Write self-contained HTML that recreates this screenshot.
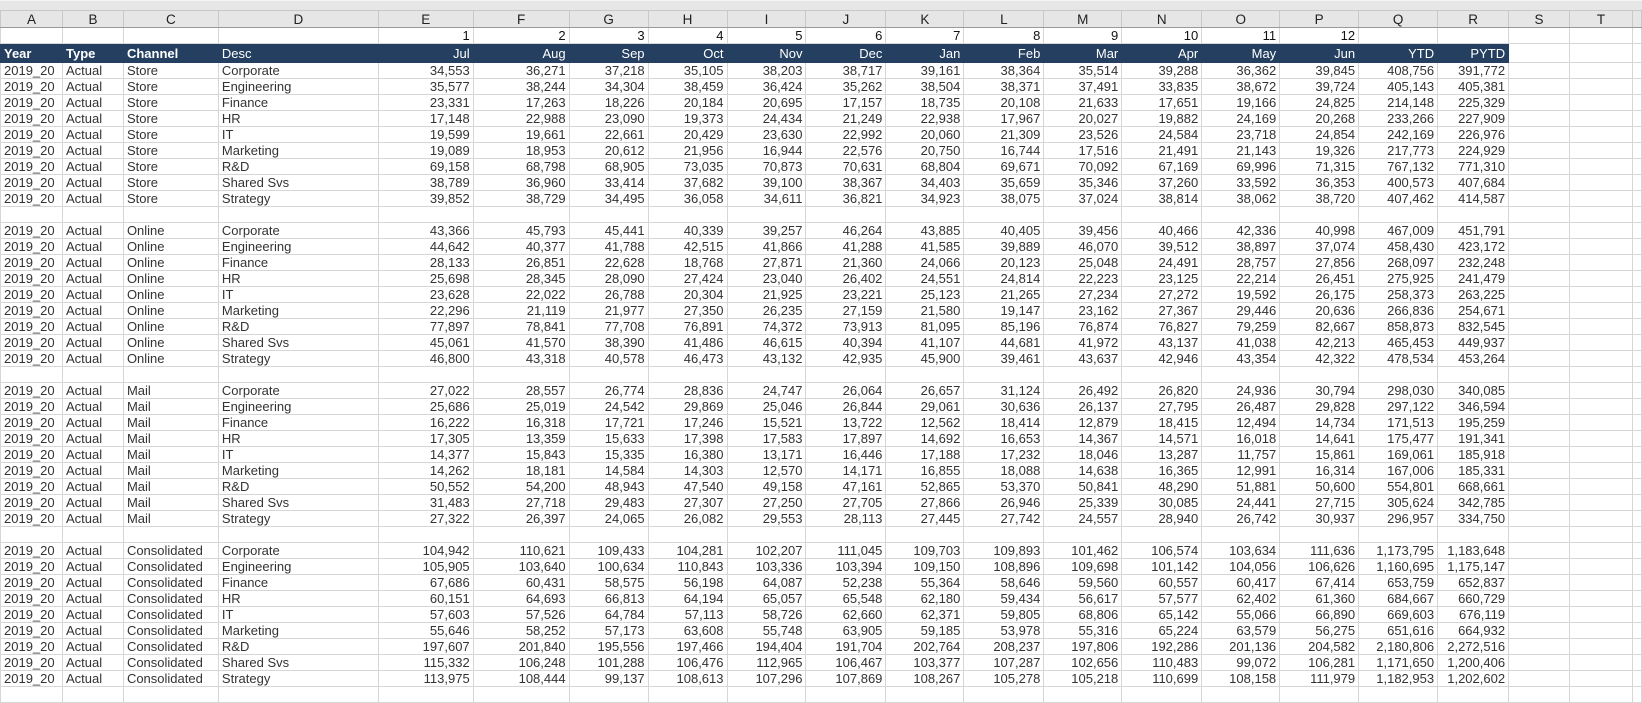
<!DOCTYPE html>
<html><head><meta charset="utf-8"><style>
html,body{margin:0;padding:0;background:#fff;width:1642px;height:691px;overflow:hidden}
.top{position:absolute;left:0;top:0;width:1642px;height:10px;background:#e6e6e6;border-top:1px solid #f4f4f4;box-sizing:border-box}
table{position:absolute;left:0;top:10px;border-collapse:collapse;table-layout:fixed;font-family:"Liberation Sans",Arial,sans-serif;font-size:13px;color:#333}
td{height:15px;padding:0 3px 0 3px;border:1px solid #d6d6d6;white-space:nowrap;overflow:hidden;line-height:15px}
tr.ch td{background:#e6e6e6;text-align:center;border-color:#c8c8c8;border-bottom:1px solid #9a9a9a;color:#222;font-size:13.5px;height:16px}
tr.num td{color:#111;text-align:right}
tr.hd td{background:#243f60;color:#fff;height:18px;border-color:#243f60;font-size:13px}
tr.hd td.b{font-weight:bold;text-align:left}
tr.hd td.n{text-align:right}
tr.hd td.x{background:#fff;border-color:#d6d6d6}
tr.d td:nth-child(n+5){text-align:right}
</style></head><body>
<div class="top"></div>
<table>
<colgroup><col style="width:62px"><col style="width:61px"><col style="width:95px"><col style="width:160px"><col style="width:95px"><col style="width:96px"><col style="width:79px"><col style="width:79px"><col style="width:79px"><col style="width:80px"><col style="width:78px"><col style="width:80px"><col style="width:78px"><col style="width:80px"><col style="width:78px"><col style="width:79px"><col style="width:79px"><col style="width:71px"><col style="width:61px"><col style="width:63px"><col style="width:9px"></colgroup>
<tr class="ch"><td>A<td>B<td>C<td>D<td>E<td>F<td>G<td>H<td>I<td>J<td>K<td>L<td>M<td>N<td>O<td>P<td>Q<td>R<td>S<td>T<td></tr>
<tr class="num"><td><td><td><td><td>1<td>2<td>3<td>4<td>5<td>6<td>7<td>8<td>9<td>10<td>11<td>12<td><td><td><td><td></tr>
<tr class="hd"><td class="b">Year<td class="b">Type<td class="b">Channel<td style="text-align:left">Desc<td class="n">Jul<td class="n">Aug<td class="n">Sep<td class="n">Oct<td class="n">Nov<td class="n">Dec<td class="n">Jan<td class="n">Feb<td class="n">Mar<td class="n">Apr<td class="n">May<td class="n">Jun<td class="n">YTD<td class="n">PYTD<td class="x"><td class="x"><td class="x"></tr>
<tr class="d"><td>2019_20<td>Actual<td>Store<td>Corporate<td>34,553<td>36,271<td>37,218<td>35,105<td>38,203<td>38,717<td>39,161<td>38,364<td>35,514<td>39,288<td>36,362<td>39,845<td>408,756<td>391,772<td><td><td></tr>
<tr class="d"><td>2019_20<td>Actual<td>Store<td>Engineering<td>35,577<td>38,244<td>34,304<td>38,459<td>36,424<td>35,262<td>38,504<td>38,371<td>37,491<td>33,835<td>38,672<td>39,724<td>405,143<td>405,381<td><td><td></tr>
<tr class="d"><td>2019_20<td>Actual<td>Store<td>Finance<td>23,331<td>17,263<td>18,226<td>20,184<td>20,695<td>17,157<td>18,735<td>20,108<td>21,633<td>17,651<td>19,166<td>24,825<td>214,148<td>225,329<td><td><td></tr>
<tr class="d"><td>2019_20<td>Actual<td>Store<td>HR<td>17,148<td>22,988<td>23,090<td>19,373<td>24,434<td>21,249<td>22,938<td>17,967<td>20,027<td>19,882<td>24,169<td>20,268<td>233,266<td>227,909<td><td><td></tr>
<tr class="d"><td>2019_20<td>Actual<td>Store<td>IT<td>19,599<td>19,661<td>22,661<td>20,429<td>23,630<td>22,992<td>20,060<td>21,309<td>23,526<td>24,584<td>23,718<td>24,854<td>242,169<td>226,976<td><td><td></tr>
<tr class="d"><td>2019_20<td>Actual<td>Store<td>Marketing<td>19,089<td>18,953<td>20,612<td>21,956<td>16,944<td>22,576<td>20,750<td>16,744<td>17,516<td>21,491<td>21,143<td>19,326<td>217,773<td>224,929<td><td><td></tr>
<tr class="d"><td>2019_20<td>Actual<td>Store<td>R&amp;D<td>69,158<td>68,798<td>68,905<td>73,035<td>70,873<td>70,631<td>68,804<td>69,671<td>70,092<td>67,169<td>69,996<td>71,315<td>767,132<td>771,310<td><td><td></tr>
<tr class="d"><td>2019_20<td>Actual<td>Store<td>Shared Svs<td>38,789<td>36,960<td>33,414<td>37,682<td>39,100<td>38,367<td>34,403<td>35,659<td>35,346<td>37,260<td>33,592<td>36,353<td>400,573<td>407,684<td><td><td></tr>
<tr class="d"><td>2019_20<td>Actual<td>Store<td>Strategy<td>39,852<td>38,729<td>34,495<td>36,058<td>34,611<td>36,821<td>34,923<td>38,075<td>37,024<td>38,814<td>38,062<td>38,720<td>407,462<td>414,587<td><td><td></tr>
<tr class="d"><td><td><td><td><td><td><td><td><td><td><td><td><td><td><td><td><td><td><td><td><td></tr>
<tr class="d"><td>2019_20<td>Actual<td>Online<td>Corporate<td>43,366<td>45,793<td>45,441<td>40,339<td>39,257<td>46,264<td>43,885<td>40,405<td>39,456<td>40,466<td>42,336<td>40,998<td>467,009<td>451,791<td><td><td></tr>
<tr class="d"><td>2019_20<td>Actual<td>Online<td>Engineering<td>44,642<td>40,377<td>41,788<td>42,515<td>41,866<td>41,288<td>41,585<td>39,889<td>46,070<td>39,512<td>38,897<td>37,074<td>458,430<td>423,172<td><td><td></tr>
<tr class="d"><td>2019_20<td>Actual<td>Online<td>Finance<td>28,133<td>26,851<td>22,628<td>18,768<td>27,871<td>21,360<td>24,066<td>20,123<td>25,048<td>24,491<td>28,757<td>27,856<td>268,097<td>232,248<td><td><td></tr>
<tr class="d"><td>2019_20<td>Actual<td>Online<td>HR<td>25,698<td>28,345<td>28,090<td>27,424<td>23,040<td>26,402<td>24,551<td>24,814<td>22,223<td>23,125<td>22,214<td>26,451<td>275,925<td>241,479<td><td><td></tr>
<tr class="d"><td>2019_20<td>Actual<td>Online<td>IT<td>23,628<td>22,022<td>26,788<td>20,304<td>21,925<td>23,221<td>25,123<td>21,265<td>27,234<td>27,272<td>19,592<td>26,175<td>258,373<td>263,225<td><td><td></tr>
<tr class="d"><td>2019_20<td>Actual<td>Online<td>Marketing<td>22,296<td>21,119<td>21,977<td>27,350<td>26,235<td>27,159<td>21,580<td>19,147<td>23,162<td>27,367<td>29,446<td>20,636<td>266,836<td>254,671<td><td><td></tr>
<tr class="d"><td>2019_20<td>Actual<td>Online<td>R&amp;D<td>77,897<td>78,841<td>77,708<td>76,891<td>74,372<td>73,913<td>81,095<td>85,196<td>76,874<td>76,827<td>79,259<td>82,667<td>858,873<td>832,545<td><td><td></tr>
<tr class="d"><td>2019_20<td>Actual<td>Online<td>Shared Svs<td>45,061<td>41,570<td>38,390<td>41,486<td>46,615<td>40,394<td>41,107<td>44,681<td>41,972<td>43,137<td>41,038<td>42,213<td>465,453<td>449,937<td><td><td></tr>
<tr class="d"><td>2019_20<td>Actual<td>Online<td>Strategy<td>46,800<td>43,318<td>40,578<td>46,473<td>43,132<td>42,935<td>45,900<td>39,461<td>43,637<td>42,946<td>43,354<td>42,322<td>478,534<td>453,264<td><td><td></tr>
<tr class="d"><td><td><td><td><td><td><td><td><td><td><td><td><td><td><td><td><td><td><td><td><td></tr>
<tr class="d"><td>2019_20<td>Actual<td>Mail<td>Corporate<td>27,022<td>28,557<td>26,774<td>28,836<td>24,747<td>26,064<td>26,657<td>31,124<td>26,492<td>26,820<td>24,936<td>30,794<td>298,030<td>340,085<td><td><td></tr>
<tr class="d"><td>2019_20<td>Actual<td>Mail<td>Engineering<td>25,686<td>25,019<td>24,542<td>29,869<td>25,046<td>26,844<td>29,061<td>30,636<td>26,137<td>27,795<td>26,487<td>29,828<td>297,122<td>346,594<td><td><td></tr>
<tr class="d"><td>2019_20<td>Actual<td>Mail<td>Finance<td>16,222<td>16,318<td>17,721<td>17,246<td>15,521<td>13,722<td>12,562<td>18,414<td>12,879<td>18,415<td>12,494<td>14,734<td>171,513<td>195,259<td><td><td></tr>
<tr class="d"><td>2019_20<td>Actual<td>Mail<td>HR<td>17,305<td>13,359<td>15,633<td>17,398<td>17,583<td>17,897<td>14,692<td>16,653<td>14,367<td>14,571<td>16,018<td>14,641<td>175,477<td>191,341<td><td><td></tr>
<tr class="d"><td>2019_20<td>Actual<td>Mail<td>IT<td>14,377<td>15,843<td>15,335<td>16,380<td>13,171<td>16,446<td>17,188<td>17,232<td>18,046<td>13,287<td>11,757<td>15,861<td>169,061<td>185,918<td><td><td></tr>
<tr class="d"><td>2019_20<td>Actual<td>Mail<td>Marketing<td>14,262<td>18,181<td>14,584<td>14,303<td>12,570<td>14,171<td>16,855<td>18,088<td>14,638<td>16,365<td>12,991<td>16,314<td>167,006<td>185,331<td><td><td></tr>
<tr class="d"><td>2019_20<td>Actual<td>Mail<td>R&amp;D<td>50,552<td>54,200<td>48,943<td>47,540<td>49,158<td>47,161<td>52,865<td>53,370<td>50,841<td>48,290<td>51,881<td>50,600<td>554,801<td>668,661<td><td><td></tr>
<tr class="d"><td>2019_20<td>Actual<td>Mail<td>Shared Svs<td>31,483<td>27,718<td>29,483<td>27,307<td>27,250<td>27,705<td>27,866<td>26,946<td>25,339<td>30,085<td>24,441<td>27,715<td>305,624<td>342,785<td><td><td></tr>
<tr class="d"><td>2019_20<td>Actual<td>Mail<td>Strategy<td>27,322<td>26,397<td>24,065<td>26,082<td>29,553<td>28,113<td>27,445<td>27,742<td>24,557<td>28,940<td>26,742<td>30,937<td>296,957<td>334,750<td><td><td></tr>
<tr class="d"><td><td><td><td><td><td><td><td><td><td><td><td><td><td><td><td><td><td><td><td><td></tr>
<tr class="d"><td>2019_20<td>Actual<td>Consolidated<td>Corporate<td>104,942<td>110,621<td>109,433<td>104,281<td>102,207<td>111,045<td>109,703<td>109,893<td>101,462<td>106,574<td>103,634<td>111,636<td>1,173,795<td>1,183,648<td><td><td></tr>
<tr class="d"><td>2019_20<td>Actual<td>Consolidated<td>Engineering<td>105,905<td>103,640<td>100,634<td>110,843<td>103,336<td>103,394<td>109,150<td>108,896<td>109,698<td>101,142<td>104,056<td>106,626<td>1,160,695<td>1,175,147<td><td><td></tr>
<tr class="d"><td>2019_20<td>Actual<td>Consolidated<td>Finance<td>67,686<td>60,431<td>58,575<td>56,198<td>64,087<td>52,238<td>55,364<td>58,646<td>59,560<td>60,557<td>60,417<td>67,414<td>653,759<td>652,837<td><td><td></tr>
<tr class="d"><td>2019_20<td>Actual<td>Consolidated<td>HR<td>60,151<td>64,693<td>66,813<td>64,194<td>65,057<td>65,548<td>62,180<td>59,434<td>56,617<td>57,577<td>62,402<td>61,360<td>684,667<td>660,729<td><td><td></tr>
<tr class="d"><td>2019_20<td>Actual<td>Consolidated<td>IT<td>57,603<td>57,526<td>64,784<td>57,113<td>58,726<td>62,660<td>62,371<td>59,805<td>68,806<td>65,142<td>55,066<td>66,890<td>669,603<td>676,119<td><td><td></tr>
<tr class="d"><td>2019_20<td>Actual<td>Consolidated<td>Marketing<td>55,646<td>58,252<td>57,173<td>63,608<td>55,748<td>63,905<td>59,185<td>53,978<td>55,316<td>65,224<td>63,579<td>56,275<td>651,616<td>664,932<td><td><td></tr>
<tr class="d"><td>2019_20<td>Actual<td>Consolidated<td>R&amp;D<td>197,607<td>201,840<td>195,556<td>197,466<td>194,404<td>191,704<td>202,764<td>208,237<td>197,806<td>192,286<td>201,136<td>204,582<td>2,180,806<td>2,272,516<td><td><td></tr>
<tr class="d"><td>2019_20<td>Actual<td>Consolidated<td>Shared Svs<td>115,332<td>106,248<td>101,288<td>106,476<td>112,965<td>106,467<td>103,377<td>107,287<td>102,656<td>110,483<td>99,072<td>106,281<td>1,171,650<td>1,200,406<td><td><td></tr>
<tr class="d"><td>2019_20<td>Actual<td>Consolidated<td>Strategy<td>113,975<td>108,444<td>99,137<td>108,613<td>107,296<td>107,869<td>108,267<td>105,278<td>105,218<td>110,699<td>108,158<td>111,979<td>1,182,953<td>1,202,602<td><td><td></tr>
<tr class="d"><td><td><td><td><td><td><td><td><td><td><td><td><td><td><td><td><td><td><td><td><td></tr>
</table>
</body></html>
